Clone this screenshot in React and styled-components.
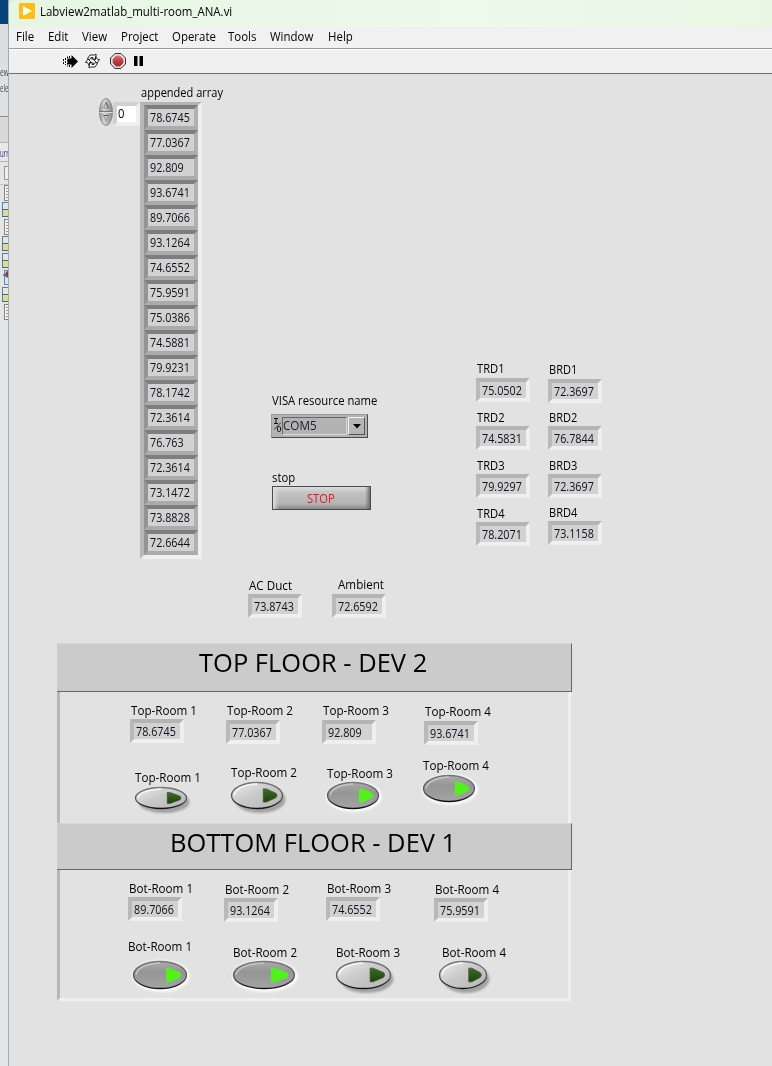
import React from "react";
import styled, { createGlobalStyle } from "styled-components";

const GlobalStyle = createGlobalStyle`
  *, *::before, *::after { box-sizing: border-box; }
  body {
    margin: 0;
    background: #e2e2e2;
    color: #000;
    font: 12px/16px "Open Sans", "Noto Sans", sans-serif;
    overflow: hidden;
  }
  svg { display: block; flex: none; overflow: visible; }
`;

/* ---------- window frame ---------- */

const Desktop = styled.div`
  display: flex;
  width: 772px;
  height: 1066px;
  background: #e2e2e2;
`;

const Backdrop = styled.aside`
  flex: none;
  width: 9px;
  height: 1066px;
  overflow: hidden;
  border-right: 1px solid #a9a9a9;
  background: #e4e5e7;
`;

const BackdropBand = styled.div`
  height: ${(p) => p.$h}px;
  background: ${(p) => p.$bg};
  border-bottom: ${(p) => (p.$line ? `1px solid ${p.$line}` : "0")};
  color: ${(p) => p.$color || "#4a4a55"};
  font-size: 11px;
  line-height: ${(p) => p.$h}px;
  white-space: nowrap;
  overflow: hidden;
`;

const Window = styled.main`
  flex: 1;
  min-width: 0;
  display: flex;
  flex-direction: column;
`;

const TitleBar = styled.header`
  display: flex;
  align-items: flex-start;
  gap: 5px;
  height: 27px;
  padding: 3px 0 0 10px;
  background: linear-gradient(90deg, #e6f5e4, #eefaea 60%, #e9f6e4);
  line-height: 17px;
  border-top-left-radius: 6px;
`;

const MenuBar = styled.nav`
  display: flex;
  height: 22px;
  padding: 2px 0 0 7px;
  background: #f0f1f0;
  border-bottom: 1px solid #9a9a9a;
`;

const MenuItem = styled.span`
  width: ${(p) => p.$w}px;
  white-space: nowrap;
`;

const Toolbar = styled.div`
  display: flex;
  align-items: center;
  height: 25px;
  padding: 0 0 1px 54px;
  background: #f0f0f0;
  border-top: 1px solid #fff;
  border-bottom: 1px solid #6e6e6e;
`;

const Slot = styled.div`
  width: ${(p) => p.$w}px;
`;

const FrontPanel = styled.section`
  flex: 1;
  background: #e2e2e2;
`;

const Fit = styled.span`
  display: inline-block;
  white-space: nowrap;
  transform: scaleX(${(p) => p.$s || 0.94});
  transform-origin: 0 50%;
`;

/* ---------- controls ---------- */

const Control = styled.div`
  flex: none;
  width: ${(p) => p.$w || 54}px;
  margin: ${(p) => p.$top || 0}px 0 0 ${(p) => p.$left || 0}px;
`;

const Caption = styled.div`
  height: 16px;
  margin-bottom: ${(p) => p.$gap ?? 1}px;
  padding-left: ${(p) => p.$indent ?? 1}px;
  white-space: nowrap;
`;

const CaptionShift = styled.div`
  margin-left: ${(p) => p.$dx}px;
`;

const Well = styled.div`
  width: 54px;
  height: 24px;
  padding-left: 2px;
  border: 4px solid;
  border-color: #b4b4b4 #efefef #efefef #b9b9b9;
  background: #d2d2d2;
  color: #101018;
  line-height: 18px;
`;

const ArrayCell = styled(Well)`
  height: 25px;
  padding-left: 2px;
  border-color: #7e7e7e #b0b0b0 #ababab #949494;
  line-height: 18px;
`;

const ArrayFrame = styled.div`
  width: 62px;
  border: 4px solid;
  border-top-width: 3px;
  border-color: #b3b3b3 #efefef #efefef #b8b8b8;
  background: #b0b0b0;
`;

const IndexField = styled.div`
  width: 27px;
  height: 24px;
  padding-left: 1px;
  border: 4px solid;
  border-color: #d0d0d0 #efefef #efefef #d0d0d0;
  background: #fff;
`;

const TopSection = styled.div`
  display: flex;
  align-items: flex-start;
  height: 503px;
  padding: 11px 0 0 90px;
`;

const ArrayGroup = styled.div`
  display: flex;
  align-items: flex-start;
  width: 173px;
`;

const IndexGroup = styled.div`
  display: flex;
  align-items: flex-start;
  width: 41px;
  padding-top: 13px;
`;

const IndexSpacer = styled.div`
  padding: 4px 0 0;
`;

const ResourceColumn = styled.div`
  width: 204px;
  padding-top: 308px;
`;

const ResourceBox = styled.div`
  display: flex;
  align-items: stretch;
  width: 97px;
  height: 24px;
  margin: 5px 0 32px -1px;
  padding: 2px;
  background: #b3b3b3;
  border: 1px solid;
  border-color: #9b9b9b #4a4a4a #4a4a4a #9b9b9b;
`;

const ResourceValue = styled.div`
  width: 67px;
  border: 1px solid;
  border-color: #686868 #d8d8d8 #d8d8d8 #686868;
  color: #202028;
  font-size: 13px;
  line-height: 14px;
`;

const DropButton = styled.div`
  display: grid;
  place-items: center;
  width: 17px;
  margin-left: 1px;
  background: #b5b5b5;
  border: 1px solid;
  border-color: #f4f4f4 #555 #555 #f4f4f4;
`;

const StopButton = styled.div`
  width: 99px;
  height: 24px;
  padding-left: 34px;
  border: 1px solid #4b4b4b;
  background:
    linear-gradient(90deg, rgba(225,225,225,.9), transparent 6px, transparent 92px, rgba(95,95,95,.8)),
    linear-gradient(#dedede, #c4c4c4 5px, #b3b3b3 17px, #888);
  color: #f5101a;
  line-height: 24px;
`;

const Column = styled.div`
  width: 72px;
  padding-top: ${(p) => p.$top}px;
`;

const DuctRow = styled.div`
  display: flex;
  align-items: flex-start;
  height: 66px;
  padding-left: 239px;
`;

const Floor = styled.section`
  width: 515px;
  margin-left: 48px;
`;

const FloorHeader = styled.h2`
  height: ${(p) => p.$h}px;
  margin: 0;
  padding-left: ${(p) => p.$left}px;
  background: #cbcbcb;
  border: solid;
  border-width: 1px 1px 1px 0;
  border-color: #d6d6d6 #666 #666;
  font-weight: 400;
  font-size: 25px;
  line-height: 37px;
  white-space: nowrap;
`;

const FloorBody = styled.div`
  width: 514px;
  height: ${(p) => p.$h}px;
  border: solid;
  border-width: 0 3px ${(p) => (p.$last ? 3 : 0)}px 3px;
  border-color: #efefef #efefef #f0f0f0 #b7b7b7;
`;

const RoomRow = styled.div`
  display: flex;
  align-items: flex-start;
  height: ${(p) => p.$h}px;
`;

/* ---------- drawings ---------- */

const AppIcon = () => (
  <svg width="16" height="16" viewBox="0 0 16 16">
    <rect width="16" height="16" rx="1" fill="#fdc010" />
    <path d="M4 3v10l9-5z" fill="#fff" />
  </svg>
);

const RunIcon = () => (
  <svg width="15" height="13" viewBox="0 0 15 13">
    <path d="M5 3.500h3.500V0L15 6.500 8.500 13V9.500H5z" fill="#000" />
    <path d="M.5 4v5M2.500 3v7M4.500 1.500v10" stroke="#000" strokeDasharray="2 1" />
    <path d="M6.500 1v2M6.500 10v2" stroke="#000" />
  </svg>
);

const RunLoopIcon = () => (
  <svg width="15" height="14" viewBox="0 0 15 14">
    <g fill="#fff" stroke="#111" strokeWidth=".9" strokeLinejoin="miter">
      <path d="M2.500 4.500 5 1h4.500L11 0v5H6.500L8 3.500H6L4.500 5.500z" />
      <path d="M12.500 9.500 10 13H5.500L4 14V9h4.500L7 10.500h2l1.500-2z" />
      <path d="M10.500 2.500 12.700 5.500h1.800L12 9 8.500 5.500h2z" />
      <path d="M4.500 11.500 2.300 8.500H.5L3 5l3.500 3.500h-2z" />
    </g>
  </svg>
);

const AbortIcon = () => (
  <svg width="16" height="16" viewBox="0 0 16 16">
    <defs>
      <linearGradient id="abort" x1="0" y1="0" x2="0" y2="1">
        <stop offset="0" stopColor="#d87a78" />
        <stop offset=".5" stopColor="#bc3c3e" />
        <stop offset="1" stopColor="#a32b30" />
      </linearGradient>
    </defs>
    <path d="M5 .6h6L15.400 5v6L11 15.400H5L.6 11V5z" fill="#f8f0f0" stroke="#222" />
    <path d="M5.900 2.600h4.200l3.300 3.300v4.200l-3.300 3.300H5.900l-3.300-3.300V5.900z" fill="url(#abort)" />
  </svg>
);

const PauseIcon = () => (
  <svg width="9" height="10" viewBox="0 0 9 10">
    <path d="M0 0h3.500v10H0zM5.500 0H9v10H5.500z" fill="#000" />
  </svg>
);

const Spinner = () => (
  <svg width="14" height="28" viewBox="0 0 14 28">
    <defs>
      <linearGradient id="spin">
        <stop offset="0" stopColor="#8c8c8c" />
        <stop offset=".35" stopColor="#d8d8d8" />
        <stop offset="1" stopColor="#858585" />
      </linearGradient>
    </defs>
    <ellipse cx="7" cy="14" rx="6.500" ry="13.500" fill="url(#spin)" stroke="#8e8e8e" />
    <path d="M.5 13.500h13" stroke="#777" />
    <path d="M.5 14.500h13" stroke="#ddd" />
    <path d="M4.500 10 7 4.500 9.500 10zM4.500 17.500 7 23l2.500-5.500z" fill="#c9c9c9" stroke="#8c8c8c" strokeWidth=".9" />
    <path d="M7 4.500 9.500 10M4.500 17.500h5" stroke="#555" strokeWidth=".9" />
  </svg>
);

const IoGlyph = () => (
  <svg width="8" height="18" viewBox="0 0 8 18">
    <g fill="none" stroke="#111">
      <path d="M0 1.500h4M2 1.500v5M0 6.500h4" />
      <path d="M7 5.500 0 12.500" strokeWidth=".8" />
      <rect x="3.500" y="9.500" width="3" height="5" rx="1.200" />
    </g>
  </svg>
);

const LedDefs = () => (
  <svg width="0" height="0">
    <defs>
      <linearGradient id="ledOff" x1="0" y1="0" x2="1" y2="1">
        <stop offset="0" stopColor="#ededed" />
        <stop offset=".45" stopColor="#cacaca" />
        <stop offset="1" stopColor="#b5b5b5" />
      </linearGradient>
      <linearGradient id="ledOn" x1="0" y1="0" x2="0" y2="1">
        <stop offset="0" stopColor="#aaa" />
        <stop offset=".4" stopColor="#959595" />
        <stop offset="1" stopColor="#a4a4a4" />
      </linearGradient>
      <linearGradient id="rim" x1="0" y1="0" x2="0" y2="1">
        <stop offset="0" stopColor="#777" />
        <stop offset=".6" stopColor="#555" />
        <stop offset="1" stopColor="#111" />
      </linearGradient>
      <linearGradient id="dim" x1="0" y1="0" x2="0" y2="1">
        <stop offset="0" stopColor="#3f6a28" />
        <stop offset="1" stopColor="#1c430b" />
      </linearGradient>
      <filter id="soft" x="-20%" y="-30%" width="140%" height="170%">
        <feGaussianBlur stdDeviation="1.300" />
      </filter>
    </defs>
  </svg>
);

const Led = ({ w, h, on }) => {
  const cx = w / 2;
  const cy = h / 2;
  const ax = w * 0.62;
  const ah = h * 0.245;
  const tip = w * 0.9;
  return (
    <svg width={w} height={h} viewBox={`0 0 ${w} ${h}`}>
      {on ? (
        <ellipse cx={cx + 1} cy={cy + 1} rx={cx + 2} ry={cy + 2} fill="#fafafa" filter="url(#soft)" />
      ) : (
        <ellipse cx={cx + 3} cy={cy + 4} rx={cx - 0.5} ry={cy} fill="#a2a2a2" filter="url(#soft)" />
      )}
      <ellipse cx={cx} cy={cy} rx={cx - 0.5} ry={cy - 0.5} fill={on ? "url(#ledOn)" : "url(#ledOff)"} stroke="url(#rim)" strokeWidth="1.300" />
      <path
        d={`M3 ${cy} Q5 3.500 ${cx} 2`}
        fill="none"
        stroke={on ? "#c4c4c4" : "#f5f5f5"}
        strokeWidth="1.500"
      />
      <path
        d={`M${ax} ${cy - ah} L${ax + 3} ${cy - ah} L${tip - 2} ${cy - ah * 0.35} Q${tip + 0.5} ${cy} ${tip - 2} ${cy + ah * 0.35} L${ax + 3} ${cy + ah} L${ax} ${cy + ah} Z`}
        fill={on ? "#4df513" : "url(#dim)"}
        stroke={on ? "#62e83a" : "#3d5d2c"}
        strokeWidth=".8"
        strokeLinejoin="round"
      />
    </svg>
  );
};

const BackdropIcons = () => (
  <svg width="9" height="160" viewBox="0 162 9 160">
    <path d="M0 184.500h9" stroke="#c4c4c4" />
    <rect x="4.500" y="166.500" width="8" height="13" fill="#eee" stroke="#999" />
    {[185, 219, 304].map((y) => (
      <g key={y}>
        <rect x="4.500" y={y + 0.5} width="8" height="15" fill="#f2f2f2" stroke="#858585" />
        <path d={`M6 ${y + 3.500}h3M6 ${y + 6.500}h3M6 ${y + 9.500}h3M6 ${y + 12.500}h3`} stroke="#999" />
      </g>
    ))}
    {[202, 236, 253, 287].map((y) => (
      <g key={y}>
        <rect x="2.500" y={y + 0.5} width="9" height="14" fill="#e6e6df" stroke="#5580aa" />
        <path d={`M3 ${y + 8}h7v6H3z`} fill="#e5d98a" />
        <path d={`M2 ${y + 7.500}h8M2 ${y + 14.500}h8`} stroke="#3f6a90" />
      </g>
    ))}
    <rect x="4.500" y="270.500" width="9" height="14" fill="#d7e4f2" stroke="#5b87c0" />
    <path d="M2 275l3-1 3-4v8z" fill="#2d7ea8" />
    <path d="M5 274l4-4v8z" fill="#a33222" />
  </svg>
);

/* ---------- data ---------- */

const MENU = [["File", 32], ["Edit", 34], ["View", 39], ["Project", 51], ["Operate", 56], ["Tools", 42], ["Window", 58], ["Help", 30]];

const READINGS = [
  "78.6745", "77.0367", "92.809", "93.6741", "89.7066", "93.1264", "74.6552", "75.9591", "75.0386",
  "74.5881", "79.9231", "78.1742", "72.3614", "76.763", "72.3614", "73.1472", "73.8828", "72.6644",
];

const TRD = [["TRD1", "75.0502", 0, 1], ["TRD2", "74.5831", 8, 0], ["TRD3", "79.9297", 8, 0], ["TRD4", "78.2071", 8, 0]];
const BRD = [["BRD1", "72.3697", 0, 1], ["BRD2", "76.7844", 7, 0], ["BRD3", "72.3697", 8, 0], ["BRD4", "73.1158", 7, 0]];

const TOP = {
  values: [
    { name: "Top-Room 1", value: "78.6745", left: 70, top: 0, gap: 0 },
    { name: "Top-Room 2", value: "77.0367", left: 42, top: 0 },
    { name: "Top-Room 3", value: "92.809", left: 42, top: 0 },
    { name: "Top-Room 4", value: "93.6741", left: 48, top: 1 },
  ],
  leds: [
    { name: "Top-Room 1", left: 75, top: 12, w: 52, h: 22, gap: 1 },
    { name: "Top-Room 2", left: 44, top: 7, w: 52, h: 27, gap: 1 },
    { name: "Top-Room 3", left: 44, top: 8, w: 52, h: 27, gap: 0, on: true },
    { name: "Top-Room 4", left: 44, top: 0, w: 52, h: 27, gap: 1, on: true },
  ],
};

const BOTTOM = {
  values: [
    { name: "Bot-Room 1", value: "89.7066", left: 68, top: 0, gap: 0 },
    { name: "Bot-Room 2", value: "93.1264", left: 42, top: 1, gap: 0 },
    { name: "Bot-Room 3", value: "74.6552", left: 48, top: 0, gap: 0 },
    { name: "Bot-Room 4", value: "75.9591", left: 54, top: 1, gap: 0 },
  ],
  leds: [
    { name: "Bot-Room 1", left: 73, top: 0, w: 54, h: 28, gap: 6, indent: -5, on: true },
    { name: "Bot-Room 2", left: 46, top: 6, w: 62, h: 28, gap: 0, on: true },
    { name: "Bot-Room 3", left: 41, top: 6, w: 55, h: 28, gap: 0 },
    { name: "Bot-Room 4", left: 48, top: 6, w: 48, h: 28, gap: 0, indent: 3 },
  ],
};

const LABEL = 0.94;
const ROOM_LABEL = 0.97;
const DIGITS = 0.9;

const Indicator = ({ name, value, left, top, gap, indent, scale = ROOM_LABEL }) => (
  <Control $left={left} $top={top}>
    <Caption $gap={gap} $indent={indent}><Fit $s={scale}>{name}</Fit></Caption>
    <Well><Fit $s={DIGITS}>{value}</Fit></Well>
  </Control>
);

const LedButton = ({ name, left, top, w, h, gap, indent = 0, on }) => (
  <Control $left={left} $top={top} $w={w}>
    <Caption $gap={gap} $indent={0}>
      <CaptionShift $dx={indent}><Fit $s={ROOM_LABEL}>{name}</Fit></CaptionShift>
    </Caption>
    <Led w={w} h={h} on={on} />
  </Control>
);

export default function App() {
  return (
    <Desktop>
      <GlobalStyle />
      <Backdrop>
        <BackdropBand $h={24} $bg="#07437a" />
        <BackdropBand $h={40} $bg="#dcdde0" />
        <BackdropBand $h={16} $bg="#dfe0e2"><Fit $s={0.6}>ew</Fit></BackdropBand>
        <BackdropBand $h={16} $bg="#dfe0e2"><Fit $s={0.55}>ele</Fit></BackdropBand>
        <BackdropBand $h={21} $bg="#dfe0e2" $line="#8d8d8d" />
        <BackdropBand $h={26} $bg="#d8d8d8" $line="#b5b5b5" />
        <BackdropBand $h={19} $bg="#e9e9e9" $line="#b5b5b5" $color="#2a2d7c"><Fit $s={0.55}>urr</Fit></BackdropBand>
        <BackdropIcons />
      </Backdrop>
      <Window>
        <TitleBar>
          <AppIcon />
          <Fit $s={0.955}>Labview2matlab_multi-room_ANA.vi</Fit>
        </TitleBar>
        <MenuBar>
          {MENU.map(([name, w]) => (
            <MenuItem key={name} $w={w}><Fit $s={0.955}>{name}</Fit></MenuItem>
          ))}
        </MenuBar>
        <Toolbar>
          <Slot $w={22}><RunIcon /></Slot>
          <Slot $w={25}><RunLoopIcon /></Slot>
          <Slot $w={24}><AbortIcon /></Slot>
          <Slot $w={12}><PauseIcon /></Slot>
        </Toolbar>
        <FrontPanel>
          <TopSection>
            <ArrayGroup>
              <IndexGroup>
                <Spinner />
                <IndexSpacer>
                  <IndexField><Fit $s={LABEL}>0</Fit></IndexField>
                </IndexSpacer>
              </IndexGroup>
              <Control $w={62}>
                <Caption><Fit $s={0.92}>appended array</Fit></Caption>
                <ArrayFrame>
                  {READINGS.map((value, i) => (
                    <ArrayCell key={i}><Fit $s={DIGITS}>{value}</Fit></ArrayCell>
                  ))}
                </ArrayFrame>
              </Control>
            </ArrayGroup>
            <ResourceColumn>
              <Caption $indent={0}><Fit $s={LABEL}>VISA resource name</Fit></Caption>
              <ResourceBox>
                <IoGlyph />
                <ResourceValue><Fit $s={0.9}>COM5</Fit></ResourceValue>
                <DropButton>
                  <svg width="8" height="5" viewBox="0 0 8 5"><path d="M0 0h8L4 4.500z" fill="#000" /></svg>
                </DropButton>
              </ResourceBox>
              <Caption $indent={0} $gap={0}><Fit $s={LABEL}>stop</Fit></Caption>
              <StopButton><Fit $s={0.93}>STOP</Fit></StopButton>
            </ResourceColumn>
            <Column $top={276}>
              {TRD.map(([name, value, top, gap]) => (
                <Indicator key={name} name={name} value={value} top={top} gap={gap} scale={0.93} />
              ))}
            </Column>
            <Column $top={277}>
              {BRD.map(([name, value, top, gap]) => (
                <Indicator key={name} name={name} value={value} top={top} gap={gap} scale={0.92} />
              ))}
            </Column>
          </TopSection>
          <DuctRow>
            <Indicator name="AC Duct" value="73.8743" top={1} gap={0} />
            <Indicator name="Ambient" value="72.6592" left={30} gap={1} indent={6} />
          </DuctRow>
          <LedDefs />
          <Floor>
            <FloorHeader $h={49} $left={142}><Fit $s={1.02}>TOP FLOOR - DEV 2</Fit></FloorHeader>
            <FloorBody $h={131}>
              <RoomRow $h={11} />
              <RoomRow $h={55}>
                {TOP.values.map((room) => <Indicator key={room.name} {...room} />)}
              </RoomRow>
              <RoomRow $h={60}>
                {TOP.leds.map((room) => <LedButton key={room.name} {...room} />)}
              </RoomRow>
            </FloorBody>
          </Floor>
          <Floor>
            <FloorHeader $h={47} $left={113}><Fit $s={1.02}>BOTTOM FLOOR - DEV 1</Fit></FloorHeader>
            <FloorBody $h={131} $last>
              <RoomRow $h={11} />
              <RoomRow $h={58}>
                {BOTTOM.values.map((room) => <Indicator key={room.name} {...room} />)}
              </RoomRow>
              <RoomRow $h={50}>
                {BOTTOM.leds.map((room) => <LedButton key={room.name} {...room} />)}
              </RoomRow>
            </FloorBody>
          </Floor>
        </FrontPanel>
      </Window>
    </Desktop>
  );
}
